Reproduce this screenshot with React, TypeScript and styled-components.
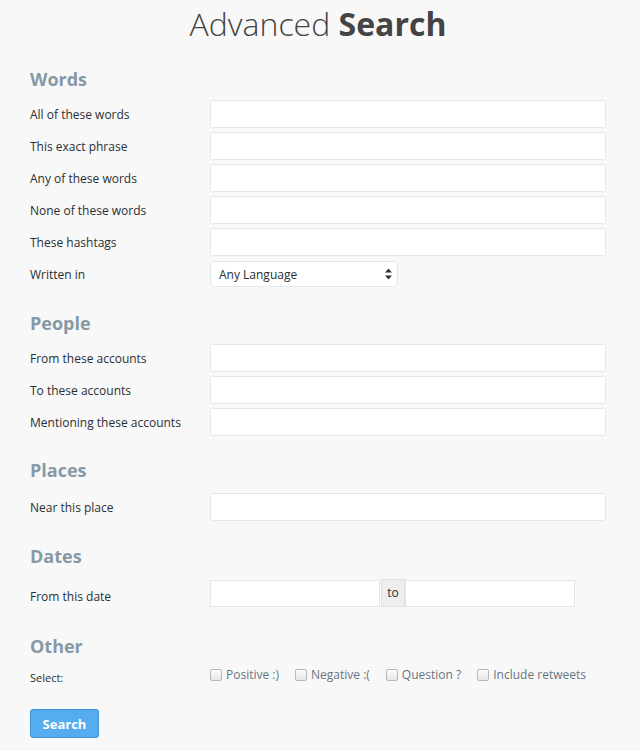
import React, { ReactElement } from 'react';
import styled, { createGlobalStyle } from 'styled-components';

const GlobalStyle = createGlobalStyle`
  html, body {
    margin: 0;
    padding: 0;
    background: #f8f8f8;
  }
  body {
    font-family: 'Open Sans', 'Liberation Sans', sans-serif;
    color: #292f33;
  }
`;

const Page = styled.div`
  width: 640px;
  padding: 0 34px 12px 30px;
  box-sizing: border-box;
`;

const Title = styled.h1`
  margin: 0;
  padding-top: 3px;
  height: 48px;
  text-align: center;
  font-size: 32px;
  line-height: 42px;
  font-weight: 300;
  color: #444;

  strong {
    font-weight: 700;
  }
`;

const Section = styled.section<{ $top: number }>`
  padding-top: ${(p) => p.$top}px;
`;

const Heading = styled.h2<{ $gap?: number }>`
  margin: 0 0 ${(p) => p.$gap ?? 9}px;
  font-size: 18px;
  line-height: 24px;
  font-weight: 700;
  color: #8899a6;
`;

const Rows = styled.div`
  display: flex;
  flex-direction: column;
  gap: 4px;
`;

const Row = styled.div`
  display: flex;
  align-items: center;
  min-height: 28px;
`;

const OtherRow = styled.div`
  display: flex;
  align-items: flex-start;
`;

const Label = styled.label<{ $drop?: number }>`
  width: 180px;
  flex-shrink: 0;
  font-size: 12px;
  color: #292f33;
  padding-top: ${(p) => p.$drop ?? 0}px;
`;

const SmallLabel = styled(Label)`
  font-size: 11px;
  line-height: 16px;
  padding-top: 3px;
`;

const TextInput = styled.input`
  width: 100%;
  height: 28px;
  box-sizing: border-box;
  border: 1px solid #e1e8ed;
  border-radius: 3px;
  background: #fff;
  font-family: inherit;
  font-size: 12px;
  padding: 0 8px;
  outline: none;
`;

const SelectBox = styled.div`
  position: relative;
  width: 188px;
  height: 26px;
  box-sizing: border-box;
  border: 1px solid #e1e8ed;
  border-radius: 4px;
  background: #fff;
  display: flex;
  align-items: center;
  padding: 0 8px;
  font-size: 12px;
  color: #292f33;
`;

const Arrows = styled.svg`
  position: absolute;
  right: 5px;
  top: 50%;
  transform: translateY(-50%);
`;

const DateGroup = styled.div`
  display: flex;
  align-items: stretch;
  height: 27px;
`;

const DateInput = styled(TextInput)`
  width: 170px;
  height: 27px;
  border-radius: 0;
`;

const Addon = styled.span`
  display: flex;
  align-items: center;
  justify-content: center;
  width: 24px;
  margin: -1px 0 0 1px;
  height: 28px;
  box-sizing: border-box;
  background: #eee;
  border: 1px solid #e1e1e1;
  font-size: 12px;
  color: #292f33;
`;

const Checks = styled.div`
  display: flex;
  align-items: center;
  gap: 16px;
  height: 16px;
`;

const Check = styled.label`
  display: flex;
  align-items: center;
  gap: 4px;
  font-size: 12px;
  line-height: 16px;
  color: #66757f;
`;

const Box = styled.span`
  width: 10px;
  height: 10px;
  border: 1px solid #b8b8b8;
  border-radius: 2px;
  background: linear-gradient(#fdfdfd, #e6e6e6);
`;

const SearchButton = styled.button`
  display: block;
  margin-top: 23px;
  width: 69px;
  height: 29px;
  border: 1px solid #3b94d9;
  border-radius: 3px;
  background: #55acee;
  color: #fff;
  font-family: inherit;
  font-size: 13px;
  font-weight: 700;
  padding: 0;
`;

const wordFields = [
  'All of these words',
  'This exact phrase',
  'Any of these words',
  'None of these words',
  'These hashtags',
];

const peopleFields = ['From these accounts', 'To these accounts', 'Mentioning these accounts'];

const options = ['Positive :)', 'Negative :(', 'Question ?', 'Include retweets'];

function App(): ReactElement {
  return (
    <Page>
      <GlobalStyle />
      <Title>
        Advanced <strong>Search</strong>
      </Title>

      <Section $top={16}>
        <Heading>Words</Heading>
        <Rows>
          {wordFields.map((f) => (
            <Row key={f}>
              <Label>{f}</Label>
              <TextInput />
            </Row>
          ))}
          <Row>
            <Label>Written in</Label>
            <SelectBox>
              Any Language
              <Arrows width="7" height="11" viewBox="0 0 7 11">
                <path d="M3.5 0 L7 4 H0 Z" fill="#333" />
                <path d="M3.5 11 L7 7 H0 Z" fill="#333" />
              </Arrows>
            </SelectBox>
          </Row>
        </Rows>
      </Section>

      <Section $top={23}>
        <Heading>People</Heading>
        <Rows>
          {peopleFields.map((f) => (
            <Row key={f}>
              <Label>{f}</Label>
              <TextInput />
            </Row>
          ))}
        </Rows>
      </Section>

      <Section $top={22}>
        <Heading $gap={11}>Places</Heading>
        <Row>
          <Label>Near this place</Label>
          <TextInput />
        </Row>
      </Section>

      <Section $top={23}>
        <Heading $gap={11}>Dates</Heading>
        <Row>
          <Label $drop={6}>From this date</Label>
          <DateGroup>
            <DateInput />
            <Addon>to</Addon>
            <DateInput />
          </DateGroup>
        </Row>
      </Section>

      <Section $top={27}>
        <Heading>Other</Heading>
        <OtherRow>
          <SmallLabel>Select:</SmallLabel>
          <Checks>
            {options.map((o) => (
              <Check key={o}>
                <Box />
                {o}
              </Check>
            ))}
          </Checks>
        </OtherRow>
      </Section>

      <SearchButton>Search</SearchButton>
    </Page>
  );
}

export default App;
